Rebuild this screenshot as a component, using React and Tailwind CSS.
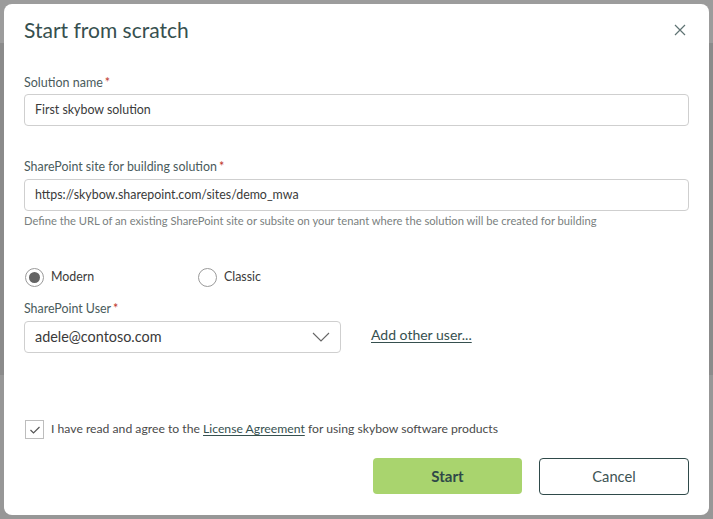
import React from "react";

export default function App() {
  return (
    <div
      className="w-[713px] h-[519px] p-[4px] bg-[linear-gradient(to_bottom,#9c9c9c_0px,#9c9c9c_43px,#8b8b8b_43px,#8b8b8b_375px,#979797_375px)]"
      style={{ fontFamily: "Lato, 'Open Sans', sans-serif" }}
    >
      <div className="w-[705px] h-[511px] bg-white rounded-[8px] flex flex-col px-[20px] pt-[9px] text-[#3e4f4f]">
        <div className="flex items-center justify-between h-[32px]">
          <h1 className="text-[21px] text-[#36504f] leading-none">Start from scratch</h1>
          <svg width="12" height="12" viewBox="0 0 12 12" className="mr-[3px] mt-[1px]">
            <path d="M1 1L11 11M11 1L1 11" stroke="#5f7373" strokeWidth="1.2" />
          </svg>
        </div>

        <label className="mt-[29px] text-[12.5px] leading-[18px] text-[#4a5b5c]">
          Solution name<span className="text-[#c0392b] ml-[2px]">*</span>
        </label>
        <div className="mt-[2px] h-[32px] w-[665px] border border-[#cfcfcf] rounded-[4px] flex items-center px-[10px] text-[12.4px] text-[#3a3a3a]">
          First skybow solution
        </div>

        <label className="mt-[32px] text-[12.4px] leading-[18px] text-[#4a5b5c]">
          SharePoint site for building solution<span className="text-[#c0392b] ml-[2px]">*</span>
        </label>
        <div className="mt-[3px] h-[32px] w-[665px] border border-[#cfcfcf] rounded-[4px] flex items-center px-[10px] text-[12.4px] text-[#3a3a3a]">
          https://skybow.sharepoint.com/sites/demo_mwa
        </div>
        <div className="mt-[2px] text-[11.2px] leading-[15px] text-[#7a7f80]">
          Define the URL of an existing SharePoint site or subsite on your tenant where the solution will be created for building
        </div>

        <div className="mt-[39px] flex items-center h-[20px] text-[12.4px] text-[#3a3a3a]">
          <div className="w-[172px] flex items-center">
            <div className="w-[19px] h-[19px] rounded-full border border-[#9a9a9a] flex items-center justify-center ml-[1px]">
              <div className="w-[11px] h-[11px] rounded-full bg-[#646464]" />
            </div>
            <span className="ml-[7px]">Modern</span>
          </div>
          <div className="flex items-center ml-[2px]">
            <div className="w-[19px] h-[19px] rounded-full border border-[#9a9a9a]" />
            <span className="ml-[7px]">Classic</span>
          </div>
        </div>

        <label className="mt-[13px] text-[12.4px] leading-[18px] text-[#4a5b5c]">
          SharePoint User<span className="text-[#c0392b] ml-[2px]">*</span>
        </label>
        <div className="mt-[3px] flex items-center">
          <div className="h-[32px] w-[317px] border border-[#cfcfcf] rounded-[4px] flex items-center justify-between pl-[10px] pr-[10px] text-[14.4px] text-[#3a3a3a]">
            <span>adele@contoso.com</span>
            <svg width="18" height="10" viewBox="0 0 18 10">
              <path d="M1 1L9 9L17 1" stroke="#666" strokeWidth="1.1" fill="none" />
            </svg>
          </div>
          <a className="ml-[30px] -mt-[5px] text-[14px] text-[#36504f] underline underline-offset-2">Add other user...</a>
        </div>

        <div className="mt-[67px] flex items-center text-[12.2px] text-[#4a4a4a]">
          <div className="w-[19px] h-[19px] border border-[#bdbdbd] flex items-center justify-center ml-[1px]">
            <svg width="12" height="10" viewBox="0 0 12 10">
              <path d="M1.5 5L4.5 8L10.5 2" stroke="#555" strokeWidth="1.2" fill="none" />
            </svg>
          </div>
          <span className="ml-[7px]">
            I have read and agree to the{" "}
            <a className="underline underline-offset-2 text-[#36504f]">License Agreement</a> for using skybow software products
          </span>
        </div>

        <div className="mt-[19px] flex justify-end gap-[17px]">
          <button className="w-[149px] h-[36px] rounded-[4px] bg-[#a9d46e] text-[15px] font-bold text-[#2f4848]">Start</button>
          <button className="w-[150px] h-[37px] rounded-[4px] border border-[#2f4a4a] bg-white text-[14.7px] text-[#3e5454]">Cancel</button>
        </div>
      </div>
    </div>
  );
}
